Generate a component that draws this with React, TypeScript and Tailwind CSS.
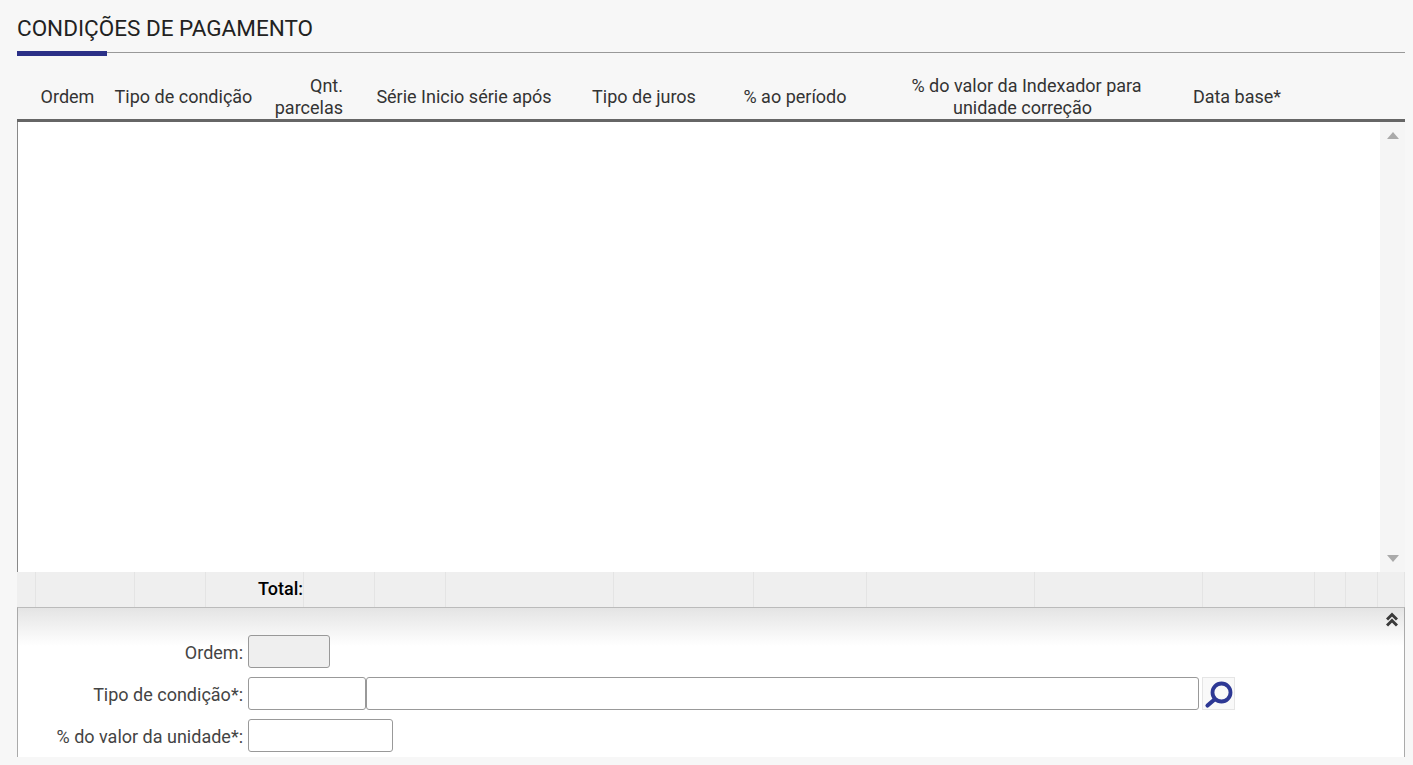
const headers = [
  { label: "Ordem", className: "w-[65px] text-center" },
  { label: "Tipo de condição", className: "w-[167px] text-center" },
  { label: "Qnt. parcelas", className: "w-[76px] text-right" },
  { label: "Série Inicio série após", className: "w-[242px] text-center" },
  { label: "Tipo de juros", className: "w-[118px] text-center" },
  { label: "% ao período", className: "w-[184px] text-center" },
  {
    label: (
      <>
        % do valor da Indexador para
        <span className="block pr-2">unidade correção</span>
      </>
    ),
    className: "w-[279px] text-center",
  },
  { label: "Data base*", className: "w-[142px] text-center" },
];

const footerCells = [19, 99, 71, 98, 71, 71, 168, 140, 113, 168, 168, 112, 31, 32, 27];

const App = () => {
  return (
    <div className="h-[765px] w-[1413px] overflow-hidden bg-[#f7f7f7] pl-[17px] pr-2 font-['Roboto',sans-serif] text-[18px] text-[#333]">
      <div className="h-[53px] border-b border-[#999] pt-[15px]">
        <h2 className="text-[22.5px] leading-[26px] text-[#222]">CONDIÇÕES DE PAGAMENTO</h2>
        <div className="mt-[10px] h-[5px] w-[90px] bg-[#2b3087]" />
      </div>

      <div className="flex h-[69px] items-end border-b-[3px] border-[#666] pl-[18px] leading-[22px]">
        {headers.map((h, i) => (
          <div key={i} className={h.className + " flex h-[44px] flex-col justify-center"}>
            {h.label}
          </div>
        ))}
      </div>

      <div className="flex h-[450px] border-l border-[#888] bg-white">
        <div className="flex-1" />
        <div className="flex w-[25px] flex-col items-center justify-between bg-[#f5f5f5] pt-[10px] pb-[10px]">
          <div className="h-0 w-0 border-x-[6px] border-b-[7px] border-x-transparent border-b-[#aaa]" />
          <div className="h-0 w-0 border-x-[6px] border-t-[7px] border-x-transparent border-t-[#aaa]" />
        </div>
      </div>

      <div className="flex h-[35px] bg-[#efefef]">
        {footerCells.map((w, i) => (
          <div
            key={i}
            style={{ width: w }}
            className="flex items-center justify-end border-r border-[#e4e4e4] pb-[2px] font-medium text-black"
          >
            {i === 3 ? "Total:" : ""}
          </div>
        ))}
      </div>

      <div className="relative h-[150px] border border-b-0 border-x-[#aaa] border-t-[#bbb] bg-white bg-[linear-gradient(to_bottom,#e4e4e4,#fff_38px)]">
        <svg
          viewBox="0 0 12 15"
          className="absolute right-[6px] top-[4px] h-[15px] w-3"
          fill="none"
          stroke="#3a3a3a"
          strokeWidth="3"
        >
          <path d="M1 7.5 L6 2.5 L11 7.5" />
          <path d="M1 13.5 L6 8.5 L11 13.5" />
        </svg>
        <div className="grid grid-cols-[225px_auto] gap-x-[5px] gap-y-[9px] pt-[27px] text-[#444]">
          <label className="flex h-[33px] items-center justify-end pt-[2px]">Ordem:</label>
          <input disabled className="h-[33px] w-[82px] rounded-[3px] border border-[#999] bg-[#efefef]" />

          <label className="flex h-[33px] items-center justify-end pt-[2px]">Tipo de condição*:</label>
          <div className="flex items-center">
            <input className="h-[33px] w-[118px] rounded-[3px] border border-[#999] bg-white" />
            <input className="h-[33px] w-[833px] rounded-[3px] border border-[#999] bg-white" />
            <button className="ml-[3px] flex h-[33px] w-[33px] items-center justify-center border border-[#e5e5e5] bg-[#f9f9f9]">
              <svg viewBox="1 1 31 31" className="h-[31px] w-[31px]" fill="none" stroke="#2d3894">
                <circle cx="19.5" cy="15.5" r="9" strokeWidth="3.8" />
                <path d="M12.5 22.5 L5.5 28.5" strokeWidth="4.2" strokeLinecap="round" />
              </svg>
            </button>
          </div>

          <label className="flex h-[33px] items-center justify-end pt-[2px]">% do valor da unidade*:</label>
          <input className="h-[33px] w-[145px] rounded-[3px] border border-[#999] bg-white" />
        </div>
      </div>
    </div>
  );
};

export default App;
